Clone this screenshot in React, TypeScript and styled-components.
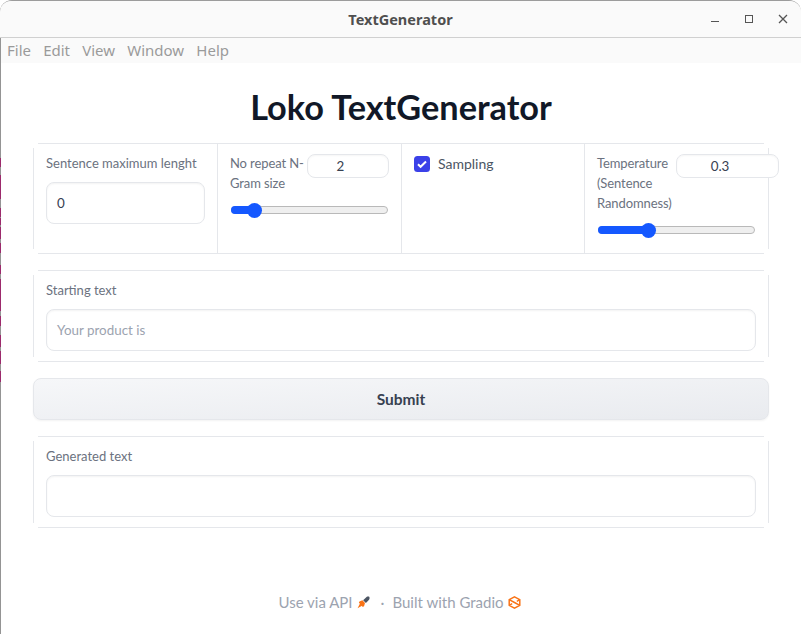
import styled, { createGlobalStyle } from "styled-components";

const GlobalStyle = createGlobalStyle`
  html, body {
    margin: 0;
    padding: 0;
    background: #ffffff;
  }

  * {
    box-sizing: border-box;
  }
`;

const textFont = `"Lato", "Open Sans", sans-serif`;
const chromeFont = `"Noto Sans", "DejaVu Sans", sans-serif`;

const lineColor = "#e5e7eb";

// magenta runs of the window behind, seen along the left edge: [from, to]
const edgeRuns = [
  [158, 167], [175, 199], [208, 217], [218, 225], [227, 239], [243, 253],
  [265, 274], [279, 311], [316, 326], [335, 347], [351, 364], [371, 382],
];

const edgeGradient = (() => {
  const stops: string[] = [];
  let last = 0;
  edgeRuns.forEach(([from, to]) => {
    stops.push(`#949494 ${last}px`, `#949494 ${from}px`, `#9c2a6c ${from}px`, `#9c2a6c ${to}px`);
    last = to;
  });
  stops.push(`#949494 ${last}px`, "#949494 100%");
  return `linear-gradient(to bottom, ${stops.join(", ")})`;
})();

const Window = styled.div`
  position: relative;
  width: 801px;
  height: 634px;
  overflow: hidden;
  display: flex;
  flex-direction: column;
  background: #ffffff;
  border-top: 1px solid #9c9c9c;
  border-radius: 12px 12px 0 0;
  font-family: ${textFont};
`;

const EdgeStrip = styled.div<{ $gradient: string }>`
  position: absolute;
  left: 0;
  top: -1px;
  bottom: 0;
  width: 1px;
  background: ${(p) => p.$gradient};
`;

const TitleBar = styled.header`
  position: relative;
  height: 37px;
  flex: none;
  display: flex;
  align-items: center;
  justify-content: center;
  background: #fafafa;
  border-bottom: 1px solid #d0d0d0;
`;

const Title = styled.span`
  font-family: ${chromeFont};
  font-size: 14.5px;
  font-weight: 700;
  color: #4f4f4f;
`;

const WindowControls = styled.div`
  position: absolute;
  right: 0;
  top: 0;
  height: 36px;
  display: flex;
  align-items: center;
  gap: 18px;
  padding-right: 10px;
`;

const ControlIcon = styled.svg`
  width: 16px;
  height: 16px;
  fill: none;
  stroke: #555555;
  stroke-width: 1;
`;

const MenuBar = styled.nav`
  height: 25px;
  flex: none;
  display: flex;
  align-items: center;
  gap: 12.2px;
  padding: 0 0 2px 7px;
  background: #fafafa;
`;

const MenuItem = styled.span`
  font-family: ${chromeFont};
  font-size: 15px;
  color: #9a9a9a;
`;

const Content = styled.main`
  flex: 1;
  display: flex;
  flex-direction: column;
  padding: 0 32px 0 33px;
`;

const Heading = styled.h1`
  margin: 24px 0 16px;
  text-align: center;
  font-size: 34.3px;
  line-height: 40px;
  font-weight: 700;
  color: #111827;
`;

// the panels show straight edges only, their corners are left open
const Panel = styled.section`
  margin-bottom: 16px;
  background:
    linear-gradient(${lineColor}, ${lineColor}) center top / calc(100% - 10px) 1px no-repeat,
    linear-gradient(${lineColor}, ${lineColor}) center bottom / calc(100% - 10px) 1px no-repeat,
    linear-gradient(${lineColor}, ${lineColor}) left center / 1px calc(100% - 10px) no-repeat,
    linear-gradient(${lineColor}, ${lineColor}) right center / 1px calc(100% - 10px) no-repeat;
`;

const ControlRow = styled(Panel)`
  display: grid;
  grid-template-columns: 184px 184px 183px 185px;
  height: 111px;
`;

const Cell = styled.div`
  position: relative;
  padding: 10px 12px;
  border-left: 1px solid ${lineColor};

  &:first-child {
    padding-left: 13px;
    border-left: none;
  }
`;

const Label = styled.div`
  font-size: 13px;
  line-height: 20px;
  color: #6b7280;
`;

const BlockLabel = styled(Label)`
  margin-bottom: 9px;
`;

const HeadLabel = styled(Label)<{ $width: number }>`
  flex: none;
  width: ${(p) => p.$width}px;
  letter-spacing: -0.1px;
`;

const TextBox = styled.div<{ $muted?: boolean }>`
  height: 42px;
  display: flex;
  align-items: center;
  padding: 0 10px;
  border: 1px solid ${lineColor};
  border-radius: 8px;
  background: #ffffff;
  box-shadow: inset 0 1px 2px rgba(0, 0, 0, 0.05);
  font-size: 13.4px;
  color: ${(p) => (p.$muted ? "#9ca3af" : "#374151")};
`;

const SliderHead = styled.div`
  display: flex;
  align-items: flex-start;
  gap: 1px;
`;

const NumberBox = styled.div<{ $width: number }>`
  flex: none;
  width: ${(p) => p.$width}px;
  height: 24px;
  margin-top: 1px;
  padding-right: 15px;
  display: flex;
  align-items: center;
  justify-content: center;
  border: 1px solid ${lineColor};
  border-radius: 8px;
  background: #ffffff;
  font-size: 13.4px;
  color: #374151;
  box-shadow: inset 0 1px 2px rgba(0, 0, 0, 0.04);
`;

const SliderTrack = styled.div`
  position: relative;
  width: 157px;
  height: 8px;
  margin: 13px 0 0 1px;
  border: 1px solid #b9b9b9;
  border-radius: 4px;
  background: #efefef;
`;

const SliderFill = styled.div`
  position: absolute;
  left: -1px;
  top: -1px;
  height: 8px;
  border-radius: 4px;
  background: #1558ff;
`;

const SliderThumb = styled.div`
  position: absolute;
  top: -4.5px;
  width: 15px;
  height: 15px;
  margin-left: -7.5px;
  border-radius: 50%;
  background: #1558ff;
`;

const CheckRow = styled.div`
  display: flex;
  align-items: center;
  gap: 8px;
  height: 20px;
  margin-top: 1px;
  font-size: 14px;
  color: #4b5563;
`;

const CheckText = styled.span`
  margin-top: -2px;
`;

const CheckMark = styled.svg`
  width: 16px;
  height: 16px;
  flex: none;
`;

const SubmitButton = styled.button`
  height: 42px;
  margin-bottom: 16px;
  border: 1px solid ${lineColor};
  border-radius: 8px;
  background: linear-gradient(to bottom right, #f6f7f9, #e9ebef);
  box-shadow: 0 1px 2px rgba(0, 0, 0, 0.05);
  font-family: ${textFont};
  font-size: 15.5px;
  font-weight: 700;
  color: #374151;
`;

const FieldPanel = styled(Panel)`
  height: 92px;
  padding: 10px 13px;
`;

const Footer = styled.footer`
  margin-top: 48px;
  padding-right: 3px;
  display: flex;
  justify-content: center;
  align-items: center;
  height: 20px;
  gap: 4px;
  font-size: 15px;
  color: #9ca3af;
`;

const FooterDot = styled.span`
  margin: 0 4px 0 7px;
`;

const FooterIcon = styled.svg`
  width: 13px;
  height: 13px;
`;

interface SliderProps {
  percent: number;
}

const Slider = ({ percent }: SliderProps) => (
  <SliderTrack>
    <SliderFill style={{ width: `${percent}%` }} />
    <SliderThumb style={{ left: `${percent}%` }} />
  </SliderTrack>
);

export default function App() {
  return (
    <>
      <GlobalStyle />
      <Window>
        <EdgeStrip $gradient={edgeGradient} />
        <TitleBar>
          <Title>TextGenerator</Title>
          <WindowControls>
            <ControlIcon viewBox="0 0 16 16">
              <path d="M4 10.5h8" strokeWidth="1.2" />
            </ControlIcon>
            <ControlIcon viewBox="0 0 16 16">
              <rect x="4.5" y="4.5" width="7" height="7" />
            </ControlIcon>
            <ControlIcon viewBox="0 0 16 16">
              <path d="M4 4l8 8M12 4l-8 8" strokeWidth="1.3" />
            </ControlIcon>
          </WindowControls>
        </TitleBar>
        <MenuBar>
          <MenuItem>File</MenuItem>
          <MenuItem>Edit</MenuItem>
          <MenuItem>View</MenuItem>
          <MenuItem>Window</MenuItem>
          <MenuItem>Help</MenuItem>
        </MenuBar>
        <Content>
          <Heading>Loko TextGenerator</Heading>
          <ControlRow>
            <Cell>
              <BlockLabel>Sentence maximum lenght</BlockLabel>
              <TextBox>0</TextBox>
            </Cell>
            <Cell>
              <SliderHead>
                <HeadLabel $width={76}>No repeat N-Gram size</HeadLabel>
                <NumberBox $width={82}>2</NumberBox>
              </SliderHead>
              <Slider percent={14.6} />
            </Cell>
            <Cell>
              <CheckRow>
                <CheckMark viewBox="0 0 16 16">
                  <rect width="16" height="16" rx="3.5" fill="#3b41e8" />
                  <path d="M4 8.3l2.6 2.5L12 5.5" fill="none" stroke="#fff" strokeWidth="2" />
                </CheckMark>
                <CheckText>Sampling</CheckText>
              </CheckRow>
            </Cell>
            <Cell>
              <SliderHead>
                <HeadLabel $width={78}>Temperature (Sentence Randomness)</HeadLabel>
                <NumberBox $width={103}>0.3</NumberBox>
              </SliderHead>
              <Slider percent={32} />
            </Cell>
          </ControlRow>
          <FieldPanel>
            <BlockLabel>Starting text</BlockLabel>
            <TextBox $muted>Your product is</TextBox>
          </FieldPanel>
          <SubmitButton>Submit</SubmitButton>
          <FieldPanel>
            <BlockLabel>Generated text</BlockLabel>
            <TextBox />
          </FieldPanel>
          <Footer>
            Use via API
            <FooterIcon viewBox="0 0 14 14">
              <path d="M6.6 4.6L10.6.8c1-.4 2.2-.3 2.8.2.3 1 .2 2-.4 3L9.6 7.6z" fill="#4b5563" />
              <path d="M5.8 4.6L2.6 5.8 2 7.6l1.2.4L.6 13.2l4.8-2.6.6 1.2 1.6-.8 1-3.4z" fill="#f97316" />
            </FooterIcon>
            <FooterDot>·</FooterDot>
            Built with Gradio
            <FooterIcon viewBox="0 0 14 14">
              <path
                d="M7 1l5.7 3v6L7 13l-5.7-3V4zM1.3 4L7 7l5.7 3M12.7 4L9.5 5.7M1.3 10l3.2-1.7"
                fill="none"
                stroke="#f97316"
                strokeWidth="1.6"
              />
            </FooterIcon>
          </Footer>
        </Content>
      </Window>
    </>
  );
}
